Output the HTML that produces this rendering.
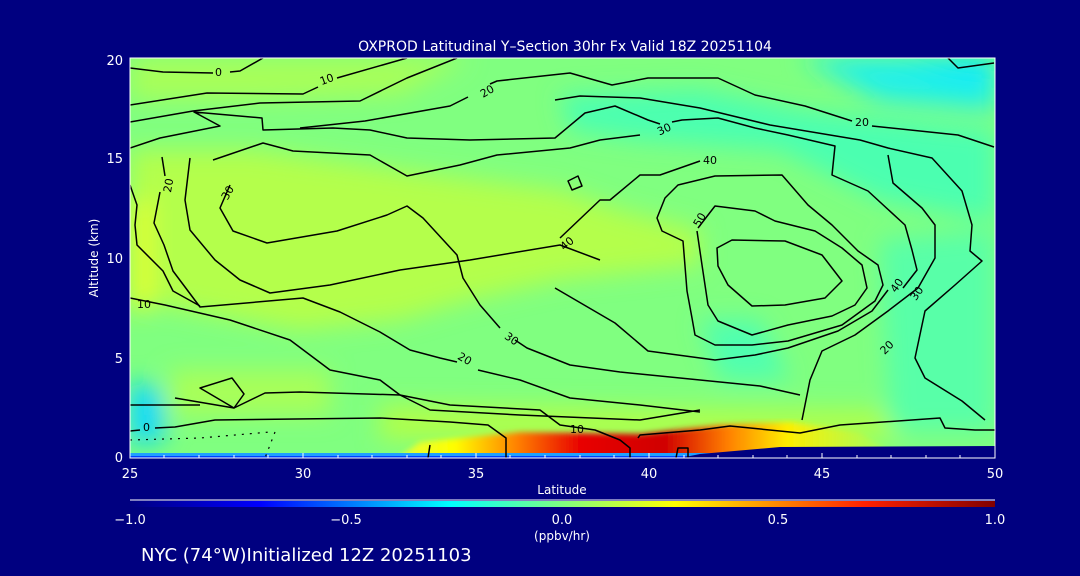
<!DOCTYPE html>
<html><head><meta charset="utf-8"><style>
html,body{margin:0;padding:0;background:#000080;}
svg{display:block}
text{font-family:"DejaVu Sans","Liberation Sans",sans-serif;fill:#fff}
.k{fill:#000;font-size:11px}
</style></head><body>
<svg width="1080" height="576" viewBox="0 0 1080 576" xmlns="http://www.w3.org/2000/svg">
<defs>
<linearGradient id="cb" x1="0" x2="1">
<stop offset="0" stop-color="#000080"/><stop offset="0.15" stop-color="#0000ff"/>
<stop offset="0.37" stop-color="#00ffff"/><stop offset="0.5" stop-color="#80ff80"/>
<stop offset="0.63" stop-color="#ffff00"/><stop offset="0.85" stop-color="#ff2000"/>
<stop offset="1" stop-color="#800000"/></linearGradient>
<linearGradient id="hot" x1="0" x2="1">
<stop offset="0" stop-color="#e0ff40"/><stop offset="0.12" stop-color="#ffff00"/><stop offset="0.25" stop-color="#ff8000"/>
<stop offset="0.38" stop-color="#e80000"/><stop offset="0.55" stop-color="#d00000"/>
<stop offset="0.68" stop-color="#ff8000"/><stop offset="0.8" stop-color="#ffee00"/>
<stop offset="1" stop-color="#a0ff60"/></linearGradient>
<filter id="bl"><feGaussianBlur stdDeviation="12"/></filter>
<filter id="bl2"><feGaussianBlur stdDeviation="3"/></filter>
<clipPath id="pc"><rect x="130" y="58" width="865" height="400"/></clipPath>
</defs>
<text x="565" y="51" font-size="14" text-anchor="middle">OXPROD Latitudinal Y–Section 30hr  Fx Valid 18Z 20251104</text>
<g clip-path="url(#pc)">
<rect x="130" y="58" width="865" height="400" fill="#80ff80"/>
<g filter="url(#bl)">
<path d="M130 58 L470 58 L400 95 L250 100 L130 100 Z" fill="#a8ff58"/>
<path d="M130 150 L250 150 L400 170 L560 190 L620 210 L700 230 L700 265 L560 280 L470 300 L400 320 L300 330 L130 300 Z" fill="#b4ff4c"/>
<path d="M130 200 L150 200 L150 310 L130 310 Z" fill="#e8ff20"/>
<path d="M560 95 L700 90 L800 110 L995 130 L995 220 L880 200 L780 150 L640 140 L570 130 Z" fill="#4cffb0"/>
<path d="M800 58 L995 58 L995 110 L880 100 Z" fill="#20f0e8"/>
<path d="M900 58 L995 58 L995 80 L950 75 Z" fill="#00e8ff"/>
<path d="M880 240 L995 230 L995 430 L890 430 Z" fill="#58ffa8"/>
<path d="M700 320 L760 320 L790 380 L720 380 Z" fill="#50ffb0"/>
<path d="M130 380 L160 390 L165 440 L130 445 Z" fill="#10d8ff"/>
<path d="M170 370 L330 370 L330 415 L170 415 Z" fill="#a8ff58"/>
<path d="M380 405 L880 410 L900 440 L380 440 Z" fill="#b0ff48"/>
</g>
<g filter="url(#bl2)">
<path d="M395 460 L420 442 L520 432 L640 434 L720 425 L790 422 L860 432 L885 448 L885 460 Z" fill="url(#hot)"/>
</g>
<rect x="130" y="453" width="865" height="5" fill="#20a0ff"/>
<rect x="130" y="456" width="865" height="2" fill="#0040ff"/>
<path d="M680 458 L700 454 L780 447 L995 446 L995 458 Z" fill="#000080"/>
<g fill="none" stroke="#000" stroke-width="1.5" stroke-linejoin="round">
<path d="M130 68 L163 72 L213 73 M230 72 L240 71 L263 58"/>
<path d="M130 105 L207 93 L303 94 L318 87 M337 78 L407 58"/>
<path d="M130 122 L193 111 L260 103 L360 101 L407 78 L457 58"/>
<path d="M130 148 L160 138 L220 126 L194 112 L262 118 L263 130 L333 128 L370 130 L407 138 L470 140 L555 138 L585 113 L615 106 L648 120 L660 124 M672 122 L682 120 L718 118 L755 128 L788 135 L835 146 L832 175 L868 191 L905 225 L912 250 L917 270 L903 288"/>
<path d="M300 128 L365 121 L450 106 L468 97 M490 84 L497 81 L570 73 L612 85 L648 78 L718 78 L755 95 L805 106 L852 121 M872 126 L958 135 L994 147"/>
<path d="M555 100 L580 96 L640 98 L700 108 L770 125 L860 140 L888 148 L932 158 L962 191 L972 225 L970 251 L982 261 L955 285 L925 311 L915 358 L925 378 L962 401 L985 420"/>
<path d="M888 155 L893 183 L922 208 L935 225 L935 258 L918 288 L888 311 L855 335 L822 351 L810 380 L802 420"/>
<path d="M948 58 L958 68 L994 63"/>
<path d="M162 157 L165 176 M160 192 L154 223 L164 245 L173 271 L200 307 L303 298 L340 312 L380 332 L410 350 L440 358 L457 362 M478 370 L520 380 L570 398 L640 405 L700 412"/>
<path d="M130 185 L137 205 L135 225 L137 245 L163 271 L173 291 L200 306"/>
<path d="M213 160 L263 143 L293 151 L370 155 L407 176 L460 165 L497 155 L570 148 L600 140 L640 135"/>
<path d="M230 185 L220 208 L233 231 L267 243 L337 231 L387 215 L407 206 L423 218 L457 255 L463 278 L480 305 L500 328 M515 340 L527 348 L570 365 L620 372 L700 380 L760 386 L800 395"/>
<path d="M190 158 L185 200 L190 230 L215 260 L240 280 L270 293 L330 285 L400 270 L470 260 L560 245 L600 260"/>
<path d="M560 238 L600 200 L610 200 L640 175 L660 175 L700 161"/>
<path d="M678 185 L715 176 L782 175 L808 205 L832 225 L858 251 L878 265 L883 285 L875 301 L842 325 L788 341 L752 345 L715 345 L695 335 L692 318 L687 291 L683 241 L662 231 L657 218 L665 198 Z"/>
<path d="M698 228 L715 206 L755 211 L775 221 L815 231 L842 248 L862 265 L867 288 L855 305 L832 316 L788 325 L752 335 L718 321 L708 305 L702 265 L697 231"/>
<path d="M717 248 L732 240 L785 241 L822 255 L842 281 L825 298 L785 305 L752 306 L728 285 L718 266 Z"/>
<path d="M555 288 L615 323 L648 351 L715 360 L755 355 L788 348 L838 331 L872 311 L888 290"/>
<path d="M568 181 L578 176 L582 186 L572 190 Z"/>
<path d="M130 298 L165 305 L230 320 L290 340 L330 370 L380 380 L400 395 L430 410 L520 415 L640 420 L700 410"/>
<path d="M200 388 L232 378 L244 394 L234 408 Z"/>
<path d="M175 398 L234 408 L265 393 L300 392 L400 395 L450 405 L540 410 L560 425 L595 430 L620 440 L630 448 L630 458 M638 438 L640 435 L700 430 L730 426 L800 433 L840 425 L940 418 L945 428 L975 430 L995 430"/>
<path d="M130 405 L200 405 M130 431 L140 430 M155 428 L175 427 L215 420 L380 418 L450 422 L488 425 L506 438 L506 458"/>
<path d="M430 445 L428 458"/>
<path d="M676 458 L678 448 L688 448 L688 458"/>
</g>
<g fill="none" stroke="#000" stroke-width="1.2" stroke-dasharray="2 6">
<path d="M130 440 L200 438 L270 432 M275 432 L265 458"/>
</g>
<text class="k" x="215" y="76">0</text><text class="k" x="320" y="83" transform="rotate(-20 327 80)">10</text>
<text class="k" x="480" y="95" transform="rotate(-30 487 91)">20</text><text class="k" x="855" y="126">20</text>
<text class="k" x="657" y="133" transform="rotate(-25 664 129)">30</text><text class="k" x="703" y="164">40</text>
<text class="k" x="160" y="192" transform="rotate(-80 166 186)">20</text><text class="k" x="220" y="198" transform="rotate(-60 226 193)">30</text>
<text class="k" x="560" y="248" transform="rotate(-40 566 244)">40</text><text class="k" x="692" y="225" transform="rotate(-60 698 220)">50</text>
<text class="k" x="890" y="290" transform="rotate(-55 896 286)">40</text><text class="k" x="910" y="298" transform="rotate(-55 916 294)">30</text>
<text class="k" x="880" y="352" transform="rotate(-45 886 348)">20</text><text class="k" x="505" y="342" transform="rotate(35 511 338)">30</text>
<text class="k" x="458" y="362" transform="rotate(30 464 358)">20</text><text class="k" x="137" y="308">10</text>
<text class="k" x="570" y="433">10</text><text class="k" x="143" y="431">0</text>
</g>
<rect x="130" y="58" width="865" height="400" fill="none" stroke="#fff" stroke-width="1"/>
<g stroke="#fff">
<path d="M164 458v-3M199 458v-3M234 458v-3M268 458v-3M338 458v-3M372 458v-3M407 458v-3M441 458v-3M510 458v-3M545 458v-3M580 458v-3M614 458v-3M684 458v-3M718 458v-3M753 458v-3M787 458v-3M857 458v-3M891 458v-3M926 458v-3M960 458v-3M303 458v-5M476 458v-5M649 458v-5M822 458v-5"/>
</g>
<g font-size="13">
<text x="123" y="65" text-anchor="end">20</text><text x="123" y="163" text-anchor="end">15</text>
<text x="123" y="263" text-anchor="end">10</text><text x="123" y="363" text-anchor="end">5</text>
<text x="123" y="462" text-anchor="end">0</text>
<text x="130" y="478" text-anchor="middle">25</text><text x="303" y="478" text-anchor="middle">30</text>
<text x="476" y="478" text-anchor="middle">35</text><text x="649" y="478" text-anchor="middle">40</text>
<text x="822" y="478" text-anchor="middle">45</text><text x="995" y="478" text-anchor="middle">50</text>
</g>
<text x="562" y="494" font-size="12" text-anchor="middle">Latitude</text>
<text x="98" y="258" font-size="12" text-anchor="middle" transform="rotate(-90 98 258)">Altitude (km)</text>
<line x1="130" y1="500" x2="995" y2="500" stroke="#fff"/>
<rect x="130" y="501" width="865" height="6" fill="url(#cb)"/>
<g font-size="13">
<text x="130" y="524" text-anchor="middle">−1.0</text><text x="346" y="524" text-anchor="middle">−0.5</text>
<text x="562" y="524" text-anchor="middle">0.0</text><text x="778" y="524" text-anchor="middle">0.5</text>
<text x="995" y="524" text-anchor="middle">1.0</text>
</g>
<text x="562" y="540" font-size="12" text-anchor="middle">(ppbv/hr)</text>
<text x="141" y="561" font-size="18">NYC (74°W)Initialized 12Z 20251103</text>
</svg>
</body></html>
